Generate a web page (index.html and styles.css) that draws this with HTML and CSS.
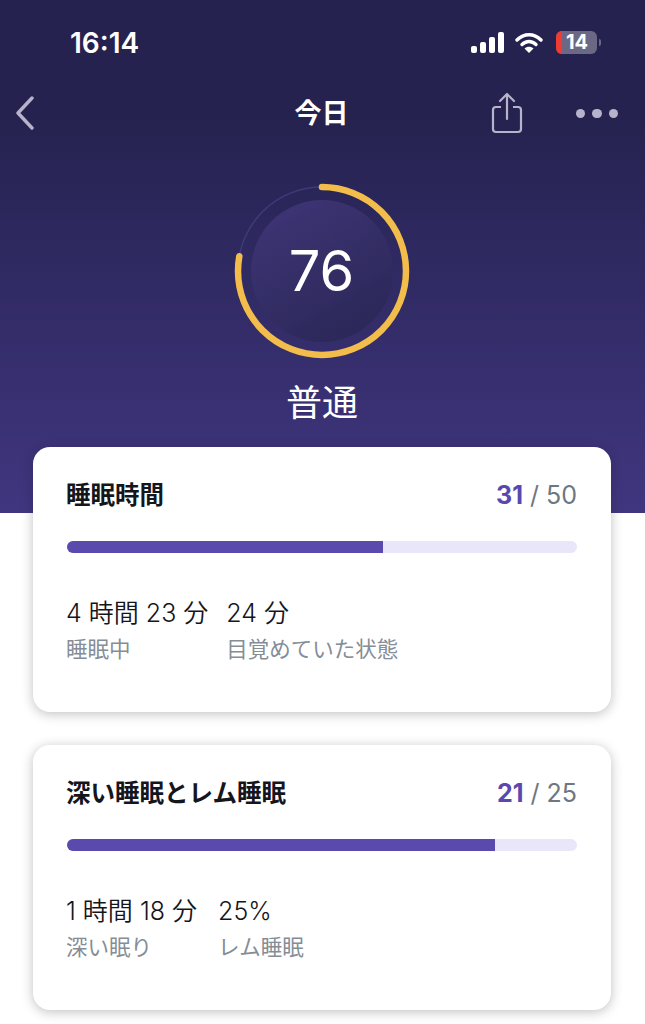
FILE: index.html
```html
<html>
<head>
	<title>今日</title>
	<link rel="stylesheet" href="styles.css">
</head>
<body>
	<div id="sleep-page">
		<div class="hero">
			<div class="status-bar">
				<span class="clock">16:14</span>
				<div class="status-icons">
					<svg class="signal" width="33" height="21" viewBox="0 0 33 21">
						<rect x="0" y="14" width="6" height="7" rx="2"/>
						<rect x="9" y="10" width="6" height="11" rx="2"/>
						<rect x="18" y="5" width="6" height="16" rx="2"/>
						<rect x="27" y="0" width="6" height="21" rx="2"/>
					</svg>
					<svg class="wifi" width="28" height="21" viewBox="0 0 28 21">
						<path d="M2 8 C9 1 19 1 26 8" fill="none" stroke="#fff" stroke-width="3.4" stroke-linecap="round"/>
						<path d="M7 12.5 C11 8.5 17 8.5 21 12.5" fill="none" stroke="#fff" stroke-width="3.4" stroke-linecap="round"/>
						<path d="M14 21 L9.5 16.4 C12 14.2 16 14.2 18.5 16.4 Z" fill="#fff"/>
					</svg>
					<div class="battery">
						<div class="battery-low"></div>
						<span class="battery-num">14</span>
					</div>
					<div class="battery-tip"></div>
				</div>
			</div>

			<div class="nav-bar">
				<svg class="nav-back" width="20" height="34" viewBox="0 0 20 34">
					<path d="M17 2 L3 17 L17 32" fill="none" stroke="#b6b3cb" stroke-width="3.4" stroke-linecap="round" stroke-linejoin="round"/>
				</svg>
				<span class="nav-title">今日</span>
				<svg class="nav-share" width="32" height="42" viewBox="0 0 32 42">
					<path d="M10 15 H5 Q2 15 2 18 V37 Q2 40 5 40 H27 Q30 40 30 37 V18 Q30 15 27 15 H22" fill="none" stroke="#b6b3cb" stroke-width="2.2"/>
					<path d="M16 27 V2 M9 9 L16 2 L23 9" fill="none" stroke="#b6b3cb" stroke-width="2.2" stroke-linecap="round" stroke-linejoin="round"/>
				</svg>
				<div class="nav-more">
					<span></span><span></span><span></span>
				</div>
			</div>

			<div class="score-ring">
				<svg width="176" height="176" viewBox="0 0 176 176">
					<defs>
						<linearGradient id="dial" x1="0" y1="0" x2="0.6" y2="1">
							<stop offset="0" stop-color="#3f3678"/>
							<stop offset="1" stop-color="#2c2859"/>
						</linearGradient>
					</defs>
					<circle cx="88" cy="88" r="84" fill="none" stroke="#3f3a78" stroke-width="1.5"/>
					<circle cx="88" cy="88" r="71" fill="url(#dial)"/>
					<circle cx="88" cy="88" r="84" fill="none" stroke="#f2bd4b" stroke-width="6.5" stroke-linecap="round" pathLength="100" stroke-dasharray="77.8 100" transform="rotate(-90 88 88)"/>
				</svg>
				<span class="score-num">76</span>
			</div>
			<div class="score-label">普通</div>
		</div>

		<div class="cards">
			<div class="card">
				<div class="card-head">
					<span class="card-title">睡眠時間</span>
					<span class="card-score"><b>31</b> / 50</span>
				</div>
				<div class="bar"><div class="bar-fill" style="width: 62%"></div></div>
				<div class="stats">
					<div class="stat">
						<div class="stat-value">4 時間 23 分</div>
						<div class="stat-label">睡眠中</div>
					</div>
					<div class="stat">
						<div class="stat-value">24 分</div>
						<div class="stat-label">目覚めていた状態</div>
					</div>
				</div>
			</div>

			<div class="card">
				<div class="card-head">
					<span class="card-title">深い睡眠とレム睡眠</span>
					<span class="card-score"><b>21</b> / 25</span>
				</div>
				<div class="bar"><div class="bar-fill" style="width: 84%"></div></div>
				<div class="stats stats-loose">
					<div class="stat">
						<div class="stat-value">1 時間 18 分</div>
						<div class="stat-label">深い眠り</div>
					</div>
					<div class="stat">
						<div class="stat-value">25%</div>
						<div class="stat-label">レム睡眠</div>
					</div>
				</div>
			</div>
		</div>
	</div>
</body>
</html>
```

FILE: styles.css
```css
html, body {
	margin: 0;
	padding: 0;
	background: #fff;
}

#sleep-page {
	width: 645px;
	height: 1024px;
	overflow: hidden;
	font-family: Inter, "Noto Sans CJK JP", sans-serif;
}

.hero {
	height: 513px;
	box-sizing: border-box;
	padding-top: 24px;
	background: linear-gradient(180deg, #25224f 0%, #25224f 22%, #403680 100%);
	color: #fff;
}

.status-bar {
	display: flex;
	justify-content: space-between;
	align-items: center;
	height: 36px;
	padding: 0 44px 0 70px;
}

.clock {
	font-size: 28px;
	font-weight: 600;
	padding-top: 2px;
}

.status-icons {
	display: flex;
	align-items: center;
}

.signal {
	fill: #fff;
	margin-right: 11px;
}

.wifi {
	margin-right: 13px;
}

.battery {
	position: relative;
	width: 41px;
	height: 23px;
	border-radius: 6px;
	background: #6b6886;
	overflow: hidden;
	text-align: center;
}

.battery-low {
	position: absolute;
	left: 0;
	top: 0;
	bottom: 0;
	width: 6px;
	background: #ee3b33;
}

.battery-num {
	position: relative;
	font-size: 20px;
	font-weight: 700;
	line-height: 23px;
	margin-left: 1px;
}

.battery-tip {
	width: 2px;
	height: 7px;
	margin-left: 2px;
	border-radius: 0 2px 2px 0;
	background: #6b6886;
}

.nav-bar {
	display: flex;
	align-items: center;
	height: 48px;
	margin-top: 30px;
	padding: 0 27px 0 15px;
	position: relative;
}

.nav-title {
	position: absolute;
	left: 0;
	right: 2px;
	top: 0;
	text-align: center;
	font-size: 27px;
	line-height: 48px;
	font-weight: 700;
}

.nav-back {
	margin-top: -2px;
}

.nav-share {
	margin-left: auto;
	margin-right: 53px;
	margin-top: -2px;
}

.nav-more {
	display: flex;
	gap: 7px;
	margin-top: -1px;
}

.nav-more span {
	width: 9.5px;
	height: 9.5px;
	border-radius: 50%;
	background: #b6b3cb;
}

.score-ring {
	position: relative;
	width: 176px;
	height: 176px;
	margin: 45px 0 0 234px;
}

.score-ring svg {
	display: block;
}

.score-num {
	position: absolute;
	left: 0;
	right: 1px;
	top: 0;
	line-height: 176px;
	text-align: center;
	font-size: 56px;
	font-weight: 400;
}

.score-label {
	text-align: center;
	font-size: 36px;
	line-height: 48px;
	margin-top: 20px;
	padding-right: 1px;
}

.cards {
	margin-top: -66px;
	padding: 0 34px 0 33px;
	display: flex;
	flex-direction: column;
	gap: 33px;
}

.card {
	height: 265px;
	box-sizing: border-box;
	padding: 28px 34px 0 34px;
	background: #fff;
	border-radius: 17px;
	box-shadow: 0 2px 12px rgba(30, 30, 40, 0.28);
}

.card-head {
	display: flex;
	justify-content: space-between;
	align-items: center;
	height: 36px;
}

.card-title {
	font-size: 24.5px;
	font-weight: 700;
	color: #15151c;
	margin-left: -1px;
}

.card-score {
	font-size: 25px;
	color: #6f7780;
	padding-top: 4px;
}

.card-score b {
	font-weight: 700;
	color: #5a48ae;
}

.bar {
	height: 12px;
	margin-top: 30px;
	border-radius: 6px;
	background: #e9e6fa;
}

.bar-fill {
	height: 100%;
	border-radius: 6px 0 0 6px;
	background: #5a4aae;
}

.stats {
	display: flex;
	gap: 19px;
	margin-top: 44px;
}

.stats-loose {
	gap: 22px;
}

.stat-value {
	font-size: 25px;
	font-weight: 350;
	line-height: 32px;
	color: #15151c;
	margin-left: -1px;
}

.stat-label {
	margin-top: 5px;
	font-size: 21.5px;
	line-height: 30px;
	color: #858d96;
	margin-left: -1px;
}
```
